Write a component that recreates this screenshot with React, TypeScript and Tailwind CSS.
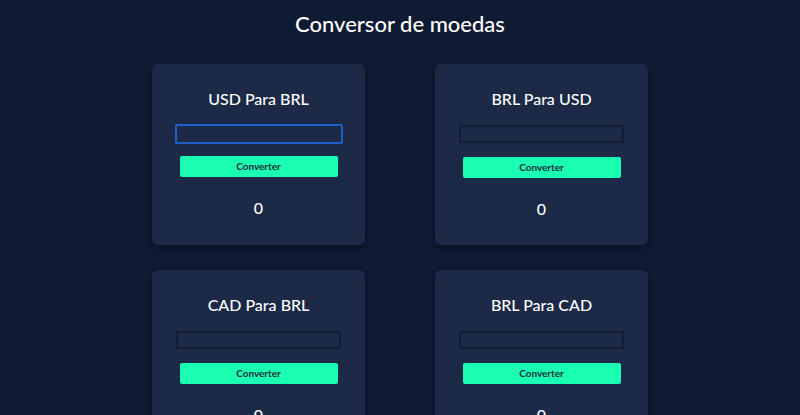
import React from 'react';

const pairs = [
  { from: 'USD', to: 'BRL', focused: true },
  { from: 'BRL', to: 'USD', focused: false },
  { from: 'CAD', to: 'BRL', focused: false },
  { from: 'BRL', to: 'CAD', focused: false },
];

function ConverterCard({ from, to, focused }: { from: string; to: string; focused: boolean }) {
  return (
    <div className="flex flex-col items-center rounded-md bg-[#1c2947] px-6 pb-6 pt-[23px] shadow-[0_3px_6px_rgba(0,0,0,0.35)]">
      <h2 className="text-[16px] font-medium leading-6 text-white">
        {from} Para {to}
      </h2>
      <input
        type="text"
        className={
          focused
            ? 'mt-[13px] h-[20px] w-[168px] rounded-[2px] border-2 border-[#1f5fc8] bg-transparent outline-none'
            : 'mt-[14px] h-[18px] w-[165px] border-2 border-[#121c33] bg-transparent outline-none'
        }
      />
      <button
        className={
          (focused ? 'mt-[12px] ' : 'mt-[14px] ') +
          'h-[21px] w-[158px] rounded-[2px] bg-[#1affb2] text-[10px] font-bold text-[#1a2c3a]'
        }
      >
        Converter
      </button>
      <p className="mt-[19px] text-[16px] font-medium leading-6 text-white">0</p>
    </div>
  );
}

export default function App() {
  return (
    <div
      className="min-h-screen bg-[#0f1a33] pt-[9px]"
      style={{ fontFamily: 'Lato, "Noto Sans", sans-serif' }}
    >
      <h1 className="text-center text-[22px] font-medium leading-[30px] text-white">
        Conversor de moedas
      </h1>
      <div className="mx-auto mt-[25px] grid w-[496px] grid-cols-2 gap-x-[70px] gap-y-[25px]">
        {pairs.map((p) => (
          <ConverterCard key={p.from + p.to} {...p} />
        ))}
      </div>
    </div>
  );
}
